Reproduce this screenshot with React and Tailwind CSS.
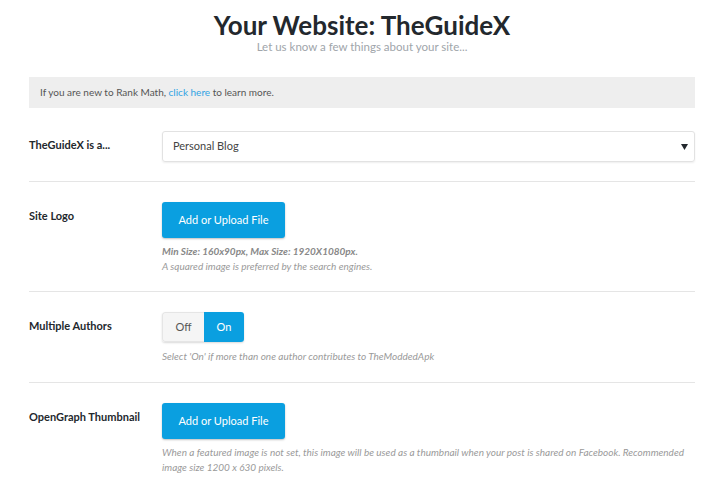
const font = { fontFamily: 'Lato, "Open Sans", sans-serif' }

const Row = ({ label, children, first, last, pb = 'pb-[18px]' }) => (
  <div
    className={`flex ${last ? '' : 'border-b border-[#e5e5e5]'} ${
      first ? 'pt-[23px] pb-[19px]' : `pt-5 ${pb}`
    }`}
  >
    <div className="w-[133px] shrink-0 pt-[6px] text-[11px] leading-4 font-bold text-[#23282d]">{label}</div>
    <div className="flex-1">{children}</div>
  </div>
)

const UploadButton = () => (
  <button className="w-[123px] h-[36px] rounded-[3px] bg-[#0a9fe0] text-white text-[11px] shadow-[0_1px_2px_rgba(0,0,0,0.25)]">
    Add or Upload File
  </button>
)

const Help = ({ children, className = '' }) => (
  <p className={`text-[10px] leading-[15px] italic text-[#9a9a9a] ${className}`}>{children}</p>
)

export default function App() {
  return (
    <div className="min-h-screen bg-white" style={font}>
      <div className="w-[667px] mx-auto pl-px pt-[10px]">
        <h1 className="text-center text-[26px] leading-[30px] font-bold text-[#23282d]">Your Website: TheGuideX</h1>
        <p className="text-center text-[11.5px] leading-4 text-[#a0a5aa] mt-[-1px]">Let us know a few things about your site...</p>

        <div className="mt-[22px] h-[31px] bg-[#eeeeee] flex items-center px-[11px] text-[10px] text-[#555]">
          <span>
            If you are new to Rank Math, <span className="text-[#2fa3e3]">click here</span> to learn more.
          </span>
        </div>

        <Row label="TheGuideX is a..." first>
          <div className="h-[31px] border border-[#e2e2e2] rounded-[3px] shadow-[0_1px_2px_rgba(0,0,0,0.07)] flex items-center justify-between pl-[10px] pr-[6px] text-[11px] text-[#444]">
            <span>Personal Blog</span>
            <svg width="7" height="6" viewBox="0 0 7 6"><path d="M0 0h7L3.5 6z" fill="#23282d" /></svg>
          </div>
        </Row>

        <Row label="Site Logo" pb="pb-[17px]">
          <UploadButton />
          <Help className="mt-[6px]">
            <span className="font-bold text-[#888]">Min Size: 160x90px, Max Size: 1920X1080px.</span>
            <br />
            A squared image is preferred by the search engines.
          </Help>
        </Row>

        <Row label="Multiple Authors">
          <div className="inline-flex h-[30px] rounded-[3px] shadow-[0_1px_2px_rgba(0,0,0,0.15)] overflow-hidden text-[11px]">
            <span className="w-[42px] flex items-center justify-center bg-[#f5f5f5] text-[#555] border border-r-0 border-[#e5e5e5] rounded-l-[3px]">Off</span>
            <span className="w-[40px] flex items-center justify-center bg-[#0a9fe0] text-white">On</span>
          </div>
          <Help className="mt-[7px]">Select 'On' if more than one author contributes to TheModdedApk</Help>
        </Row>

        <Row label="OpenGraph Thumbnail" last>
          <UploadButton />
          <Help className="mt-[6px]">
            When a featured image is not set, this image will be used as a thumbnail when your post is shared on Facebook. Recommended image size 1200 x 630 pixels.
          </Help>
        </Row>
      </div>
    </div>
  )
}
